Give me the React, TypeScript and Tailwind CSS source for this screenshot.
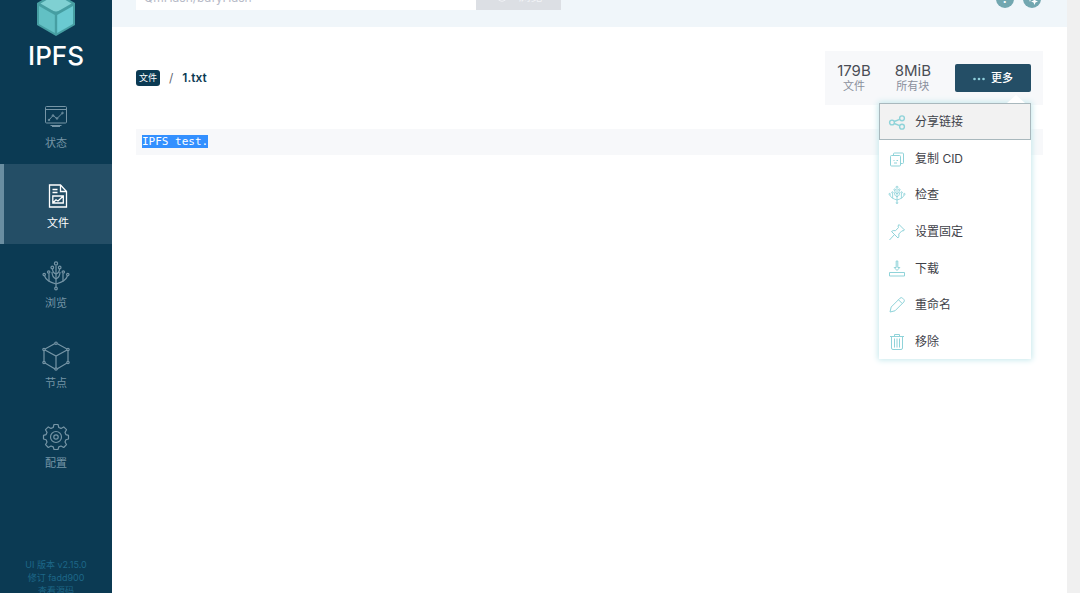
import type { ReactNode } from 'react';

type IconProps = { className?: string };

function Logo() {
    return (
        <svg className="-mt-2 h-11 w-10" viewBox="0 0 40 44" aria-hidden="true">
            <path d="M20 0 39 11v22L20 44 1 33V11z" fill="#469ea2" />
            <path d="M20 2.5 35.5 11.5 20 20.5 4.5 11.5z" fill="#7fd0d2" />
            <path d="M3 14 18.8 23v18L3 32z" fill="#62c0c4" />
            <path d="M37 14 21.2 23v18L37 32z" fill="#6acad1" />
            <path d="M16 18.5q4 2 8 0L20 22z" fill="#469ea2" />
        </svg>
    );
}

function StatusIcon({ className }: IconProps) {
    return (
        <svg className={className} viewBox="0 0 32 32" fill="none" stroke="currentColor">
            <rect x="5.5" y="6.5" width="21" height="16.5" rx="1" />
            <path d="M5.5 9.500h21M12 26.5h8M10.5 25.5h11" />
            <path d="m9 20 4-4.5 4 3 5.5-5.5" />
            <circle cx="9" cy="20" r=".8" />
            <circle cx="13" cy="15.500" r=".8" />
            <circle cx="17" cy="18.500" r=".8" />
            <circle cx="22.500" cy="13" r=".8" />
        </svg>
    );
}

function FileIcon({ className }: IconProps) {
    return (
        <svg className={className} viewBox="0 0 32 32" fill="none" stroke="currentColor" strokeWidth="1.300">
            <path d="M7.500 5h11l6 6.500v15.500h-17z" />
            <path d="M18.500 5v6.500h6M10.500 9.500h5M10.500 12.500h5" />
            <path d="M10.800 16h10.500v7H10.800zM11 22.800l3-3 2 1.200 5-4.800" />
        </svg>
    );
}

function TreeIcon({ className }: IconProps) {
    return (
        <svg className={className} viewBox="0 0 32 32" fill="none" stroke="currentColor" strokeWidth="1.200">
            <path d="M16 6v21" />
            <path d="M16 24C10 22 6 20.500 4.600 16M16 24c6-2 10-3.500 11.400-8" />
            <path d="M9 21.200V13.500M23 21.200V13.500" />
            <path d="M16 19c-3-1.500-4-3-4-7M16 19c3-1.500 4-3 4-7" />
            <path d="M16 14c-2-.8-3.500-2-3.500-5M16 14c2-.8 3.500-2 3.500-5" />
            <circle cx="16" cy="28.500" r="1.300" />
            <circle cx="16" cy="3.500" r="1.600" />
            <circle cx="4.200" cy="14.600" r="1.200" />
            <circle cx="27.800" cy="14.600" r="1.200" />
            <circle cx="8.700" cy="12" r="1.200" />
            <circle cx="23.300" cy="12" r="1.200" />
            <circle cx="12.300" cy="7.500" r="1.300" />
            <circle cx="19.700" cy="7.500" r="1.300" />
        </svg>
    );
}

function CubeIcon({ className }: IconProps) {
    return (
        <svg className={className} viewBox="0 0 32 32" fill="none" stroke="currentColor" strokeWidth="1.200">
            <path d="M16 3 28 9.500v13L16 29.500 4 22.500v-13z" />
            <path d="m4 9.500 12 6.500 12-6.500M16 16v13" />
            <g fill="#0b3a53">
                <circle cx="16" cy="3.200" r="1.200" />
                <circle cx="4" cy="9.500" r="1.200" />
                <circle cx="28" cy="9.500" r="1.200" />
                <circle cx="4" cy="22.500" r="1.200" />
                <circle cx="28" cy="22.500" r="1.200" />
                <circle cx="16" cy="29" r="1.200" />
            </g>
        </svg>
    );
}

function GearIcon({ className }: IconProps) {
    return (
        <svg className={className} viewBox="0 0 32 32" fill="none" stroke="currentColor" strokeWidth="1.200" strokeLinejoin="round">
            <path d="M14 4.500h4l.8 3 2.200.9 2.700-1.500 2.800 2.800-1.500 2.700.9 2.200 2.600.8v3.600l-2.600.8-.9 2.200 1.500 2.700-2.800 2.800-2.700-1.500-2.200.9-.8 2.600h-4l-.8-2.600-2.200-.9-2.700 1.500-2.800-2.800L7 22l-.9-2.200-2.600-.8v-3.600l2.600-.8.9-2.200-1.500-2.700 2.800-2.800L11 8.400l2.200-.9z" />
            <circle cx="16" cy="17" r="5.500" />
            <circle cx="16" cy="17" r="2.200" />
        </svg>
    );
}

function MenuSvg({ children }: { children: ReactNode }) {
    return (
        <svg className="size-5 shrink-0 text-[#8fd3d9]" viewBox="0 0 20 20" fill="none" stroke="currentColor" aria-hidden="true">
            {children}
        </svg>
    );
}

const navItems = [
    { label: '状态', Icon: StatusIcon },
    { label: '文件', Icon: FileIcon, active: true },
    { label: '浏览', Icon: TreeIcon },
    { label: '节点', Icon: CubeIcon },
    { label: '配置', Icon: GearIcon },
];

const menuItems = [
    {
        label: '分享链接',
        focused: true,
        icon: (
            <MenuSvg>
                <g strokeWidth="1.400">
                    <circle cx="5" cy="10.500" r="2.400" />
                    <circle cx="15" cy="6.300" r="2.400" />
                    <circle cx="15" cy="14.700" r="2.400" />
                    <path d="m7.200 9.500 5.500-2.200M7.200 11.500l5.500 2.200" />
                </g>
            </MenuSvg>
        ),
    },
    {
        label: '复制 CID',
        icon: (
            <MenuSvg>
                <rect x="3.500" y="6.500" width="10" height="10.500" rx="1" />
                <path d="M6.500 6.500V5q0-1 1-1h8q1 0 1 1v8.500q0 1-1 1h-2M6.500 11.500h1M9.500 11.500h1.500M7 14h3" />
            </MenuSvg>
        ),
    },
    { label: '检查', icon: <TreeIcon className="size-5 shrink-0 text-[#7ccbd3]" /> },
    {
        label: '设置固定',
        icon: (
            <MenuSvg>
                <path d="m12 2.500 5.500 5.500-1.500 1-1-.3-3.200 3.300q.6 2.500-.8 4L4.500 9.500q1.500-1.500 4-.8L11.500 5.500 11 4zM7.500 12.500l-5 5.500" />
            </MenuSvg>
        ),
    },
    {
        label: '下载',
        icon: (
            <MenuSvg>
                <path d="M9.200 2h1.600v6.500h2L10 11.500 7.200 8.500h2zM2.500 13.500h15v3.500h-15z" />
            </MenuSvg>
        ),
    },
    {
        label: '重命名',
        icon: (
            <MenuSvg>
                <path d="m3 17 1.200-5L13 3.200q1.200-1.200 2.600 0l1.200 1.200q1.200 1.300 0 2.600L8 15.800zM11.500 4.800l3.700 3.700" />
            </MenuSvg>
        ),
    },
    {
        label: '移除',
        icon: (
            <MenuSvg>
                <path d="M4.500 4.500V16q0 1.500 1.500 1.500h8q1.500 0 1.500-1.500V4.500M3 4.500h14M7.500 4.500V2.500h5v2M7.500 6.500v9M10 6.500v9M12.500 6.500v9" />
            </MenuSvg>
        ),
    },
];

function Stat({ value, label }: { value: string; label: string }) {
    return (
        <div className="flex flex-col items-center">
            <span className="text-[15px] leading-4 text-[#4a4d55]">{value}</span>
            <span className="text-[11px] leading-[14px] text-[#8a8f9c]">{label}</span>
        </div>
    );
}

function Sidebar() {
    return (
        <aside className="flex w-28 shrink-0 flex-col bg-[#0b3a53]">
            <a href="#/" className="flex flex-col items-center pb-3 text-white">
                <Logo />
                <span className="mt-1 text-[26px] leading-8 font-medium">IPFS</span>
            </a>
            <nav>
                {navItems.map(({ label, Icon, active }) => (
                    <a
                        key={label}
                        href={'#/' + label}
                        className={
                            active
                                ? 'flex h-20 flex-col items-center border-l-4 border-[#6a8ea1] bg-[#244e66] pt-4 text-white'
                                : 'flex h-20 flex-col items-center pt-4 text-[#7695a6]'
                        }
                    >
                        <Icon className="size-8" />
                        <span className="mt-[3px] text-[11px] leading-4">{label}</span>
                    </a>
                ))}
            </nav>
            <div className="mt-auto -mb-1 flex flex-col items-center text-[9px] leading-[13px] text-[#1d6788]">
                <a href="#/version">UI 版本 v2.15.0</a>
                <a href="#/revision">修订 fadd900</a>
                <a href="#/source">查看源码</a>
            </div>
        </aside>
    );
}

function Header() {
    return (
        <header className="-mt-12 flex items-end bg-[#f0f6fa] px-6 pt-5 pb-[17px]">
            <input
                aria-label="QmHash/bafyHash"
                placeholder="QmHash/bafyHash"
                className="h-[38px] w-[340px] bg-white px-2 pt-3 text-xs placeholder:text-[#b7bbc8]"
            />
            <button className="flex h-[38px] w-[85px] items-center justify-center gap-2 bg-[#dcdfe4] pt-3 text-xs text-[#f3f5f8]">
                <svg className="size-4" viewBox="0 0 20 20" fill="none" stroke="currentColor" aria-hidden="true">
                    <path d="M2 10q8-11 16 0-8 11-16 0z" />
                    <circle cx="10" cy="10" r="3" />
                </svg>
                浏览
            </button>
            <div className="mb-0.5 ml-auto flex gap-[9px] pr-0.5">
                <button aria-label="帮助" className="flex size-[18px] items-center justify-center rounded-full bg-[#72a7b0] text-[13px] font-semibold text-white">
                    ?
                </button>
                <button aria-label="导览" className="flex size-[18px] items-center justify-center rounded-full bg-[#72a7b0] text-white">
                    <svg className="size-3.5" viewBox="0 0 14 14" fill="currentColor">
                        <path d="m5 2 1 3 3 1-3 1-1 3-1-3-3-1 3-1zM9.500 6l1 2.500 2.500 1-2.500 1-1 2.500-1-2.500-2.500-1 2.500-1z" />
                    </svg>
                </button>
            </div>
        </header>
    );
}

function MoreMenu() {
    return (
        <div className="relative">
            <button className="flex h-7 w-[76px] items-center justify-center gap-1.5 rounded-xs bg-[#244e66] pt-px text-[11px] font-medium text-white">
                <svg className="h-1 w-3" viewBox="0 0 12 4" fill="#8fd0dc" aria-hidden="true">
                    <circle cx="1.500" cy="2" r="1.300" />
                    <circle cx="6" cy="2" r="1.300" />
                    <circle cx="10.500" cy="2" r="1.300" />
                </svg>
                更多
            </button>
            <div className="absolute top-full right-0 mt-[11px] w-[152px] bg-white shadow-[0_0_6px_1px_#c4e8ec]">
                <svg className="absolute -top-2 right-1.5 h-2 w-[18px]" viewBox="0 0 18 8" aria-hidden="true">
                    <path d="M0 8 9 0l9 8z" fill="#fff" />
                </svg>
                <div role="menu" className="grid h-64 grid-rows-7">
                    {menuItems.map((item) => (
                        <button
                            key={item.label}
                            role="menuitem"
                            className={
                                item.focused
                                    ? 'flex items-center gap-2 border border-[#a9b8bd] bg-[#f2f2f2] px-[7px] pt-0.5 text-xs text-[#3f424a]'
                                    : 'flex items-center gap-2 border border-transparent px-[7px] pt-0.5 text-xs text-[#3f424a]'
                            }
                        >
                            {item.icon}
                            {item.label}
                        </button>
                    ))}
                </div>
            </div>
        </div>
    );
}

export default function App() {
    return (
        <div className="flex h-screen overflow-hidden bg-white font-['Inter','Noto_Sans_CJK_SC',sans-serif]">
            <Sidebar />
            <div className="min-w-0 flex-1">
                <Header />
                <main className="px-6 pt-6">
                    <div className="flex items-center justify-between">
                        <div className="flex items-center text-xs">
                            <a href="#/files" className="rounded-[3px] bg-[#0b3a53] px-[3px] text-[9px] leading-4 text-white">
                                文件
                            </a>
                            <span className="mx-[9px] text-[#5f6672]">/</span>
                            <span className="font-semibold text-[#0b3a53]">1.txt</span>
                        </div>
                        <div className="flex items-center gap-6 bg-[#f7f8fa] px-3 py-3">
                            <Stat value="179B" label="文件" />
                            <Stat value="8MiB" label="所有块" />
                            <MoreMenu />
                        </div>
                    </div>
                    <pre className="mt-6 bg-[#f7f8fa] px-1.5 py-1.5 font-['DejaVu_Sans_Mono',monospace] text-[11px] leading-[14px]">
                        <span className="bg-[#3390ff] text-white">IPFS test.</span>
                    </pre>
                </main>
            </div>
            <div className="w-[13px] shrink-0 bg-[#f0f0f0]" />
        </div>
    );
}
